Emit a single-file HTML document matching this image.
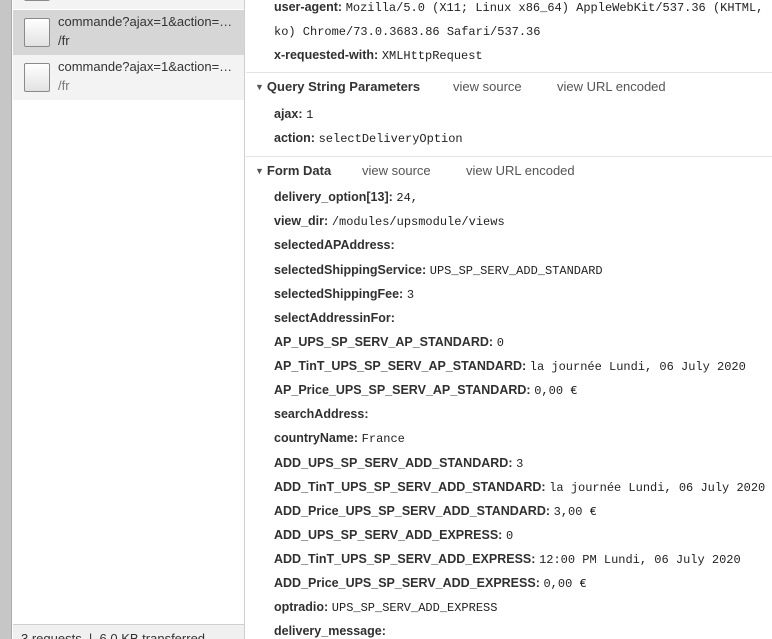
<!DOCTYPE html>
<html><head><meta charset="utf-8"><style>
*{margin:0;padding:0;box-sizing:border-box}
html,body{width:772px;height:639px;overflow:hidden}
body{background:#fff;position:relative;font-family:"Liberation Sans",sans-serif;font-size:13px;color:#303030}
.strip{position:absolute;left:0;top:0;width:12px;height:639px;background:#c6c6c6;border-right:1px solid #aaa}
.list{position:absolute;left:13px;top:0;width:232px;height:639px;background:#fff;border-right:1px solid #cfcfcf;overflow:hidden}
.item{position:absolute;left:0;width:231px;height:45px}
.ic{position:absolute;left:11px;top:8px;width:26px;height:29px;border:1px solid #8a8a8a;border-radius:2px;background:linear-gradient(#fff,#e2e2e2)}
.t1{position:absolute;left:45px;top:4px;font-size:13px;color:#333;white-space:nowrap}
.t2{position:absolute;left:45px;top:23px;font-size:13px;color:#333}
.status{position:absolute;left:0;top:624px;width:231px;height:20px;background:#f0f0f0;border-top:1px solid #cfcfcf;font-size:13px;padding:6px 8px;color:#333;white-space:nowrap}
.r{position:absolute;left:274px;height:24px;line-height:24px;white-space:nowrap}
.r b{font-weight:bold;color:#303030;font-size:12.5px}
.r span{font-family:"Liberation Mono","DejaVu Sans Mono",monospace;font-size:12px;color:#222}
.h{position:absolute;left:255px;height:24px;line-height:24px;white-space:nowrap;font-weight:bold;color:#333;font-size:13px}
.h i{font-style:normal;font-size:9px;color:#555;margin-right:3px;position:relative;top:-1px}
.v{position:absolute;font-weight:normal;color:#555;height:24px;line-height:24px;font-size:13px}
.line{position:absolute;left:246px;width:526px;height:1px;background:#e2e2e2}
</style></head><body>
<div class="strip"></div>
<div class="list">
 <div class="item" style="top:-36px;background:#f3f3f3"><div class="ic"></div><div class="t2">/fr</div></div>
 <div class="item" style="top:10px;background:#d6d6d6"><div class="ic"></div><div class="t1">commande?ajax=1&amp;action=…</div><div class="t2">/fr</div></div>
 <div class="item" style="top:55px;background:#f3f3f3"><div class="ic"></div><div class="t1">commande?ajax=1&amp;action=…</div><div class="t2" style="color:#777">/fr</div></div>
 <div class="status">3 requests &nbsp;|&nbsp; 6.0 KB transferred</div>
</div>
<div class="r" style="top:-5px"><b>user-agent:</b> <span>Mozilla/5.0 (X11; Linux x86_64) AppleWebKit/537.36 (KHTML, li</span></div>
<div class="r" style="top:19px"><span>ko) Chrome/73.0.3683.86 Safari/537.36</span></div>
<div class="r" style="top:43px"><b>x-requested-with:</b> <span>XMLHttpRequest</span></div>
<div class="line" style="top:72px"></div>
<div class="h" style="top:75px"><i>▼</i>Query String Parameters</div>
<div class="v" style="top:75px;left:453px">view source</div>
<div class="v" style="top:75px;left:557px">view URL encoded</div>
<div class="r" style="top:102px"><b>ajax:</b> <span>1</span></div>
<div class="r" style="top:126px"><b>action:</b> <span>selectDeliveryOption</span></div>
<div class="line" style="top:156px"></div>
<div class="h" style="top:159px"><i>▼</i>Form Data</div>
<div class="v" style="top:159px;left:362px">view source</div>
<div class="v" style="top:159px;left:466px">view URL encoded</div>
<div class="r" style="top:185px"><b>delivery_option[13]:</b> <span>24,</span></div>
<div class="r" style="top:209px"><b>view_dir:</b> <span>/modules/upsmodule/views</span></div>
<div class="r" style="top:233px"><b>selectedAPAddress:</b></div>
<div class="r" style="top:258px"><b>selectedShippingService:</b> <span>UPS_SP_SERV_ADD_STANDARD</span></div>
<div class="r" style="top:282px"><b>selectedShippingFee:</b> <span>3</span></div>
<div class="r" style="top:306px"><b>selectAddressinFor:</b></div>
<div class="r" style="top:330px"><b>AP_UPS_SP_SERV_AP_STANDARD:</b> <span>0</span></div>
<div class="r" style="top:354px"><b>AP_TinT_UPS_SP_SERV_AP_STANDARD:</b> <span>la journée Lundi, 06 July 2020</span></div>
<div class="r" style="top:378px"><b>AP_Price_UPS_SP_SERV_AP_STANDARD:</b> <span>0,00 €</span></div>
<div class="r" style="top:402px"><b>searchAddress:</b></div>
<div class="r" style="top:426px"><b>countryName:</b> <span>France</span></div>
<div class="r" style="top:451px"><b>ADD_UPS_SP_SERV_ADD_STANDARD:</b> <span>3</span></div>
<div class="r" style="top:475px"><b>ADD_TinT_UPS_SP_SERV_ADD_STANDARD:</b> <span>la journée Lundi, 06 July 2020</span></div>
<div class="r" style="top:499px"><b>ADD_Price_UPS_SP_SERV_ADD_STANDARD:</b> <span>3,00 €</span></div>
<div class="r" style="top:523px"><b>ADD_UPS_SP_SERV_ADD_EXPRESS:</b> <span>0</span></div>
<div class="r" style="top:547px"><b>ADD_TinT_UPS_SP_SERV_ADD_EXPRESS:</b> <span>12:00 PM Lundi, 06 July 2020</span></div>
<div class="r" style="top:571px"><b>ADD_Price_UPS_SP_SERV_ADD_EXPRESS:</b> <span>0,00 €</span></div>
<div class="r" style="top:595px"><b>optradio:</b> <span>UPS_SP_SERV_ADD_EXPRESS</span></div>
<div class="r" style="top:619px"><b>delivery_message:</b></div>
</body></html>
